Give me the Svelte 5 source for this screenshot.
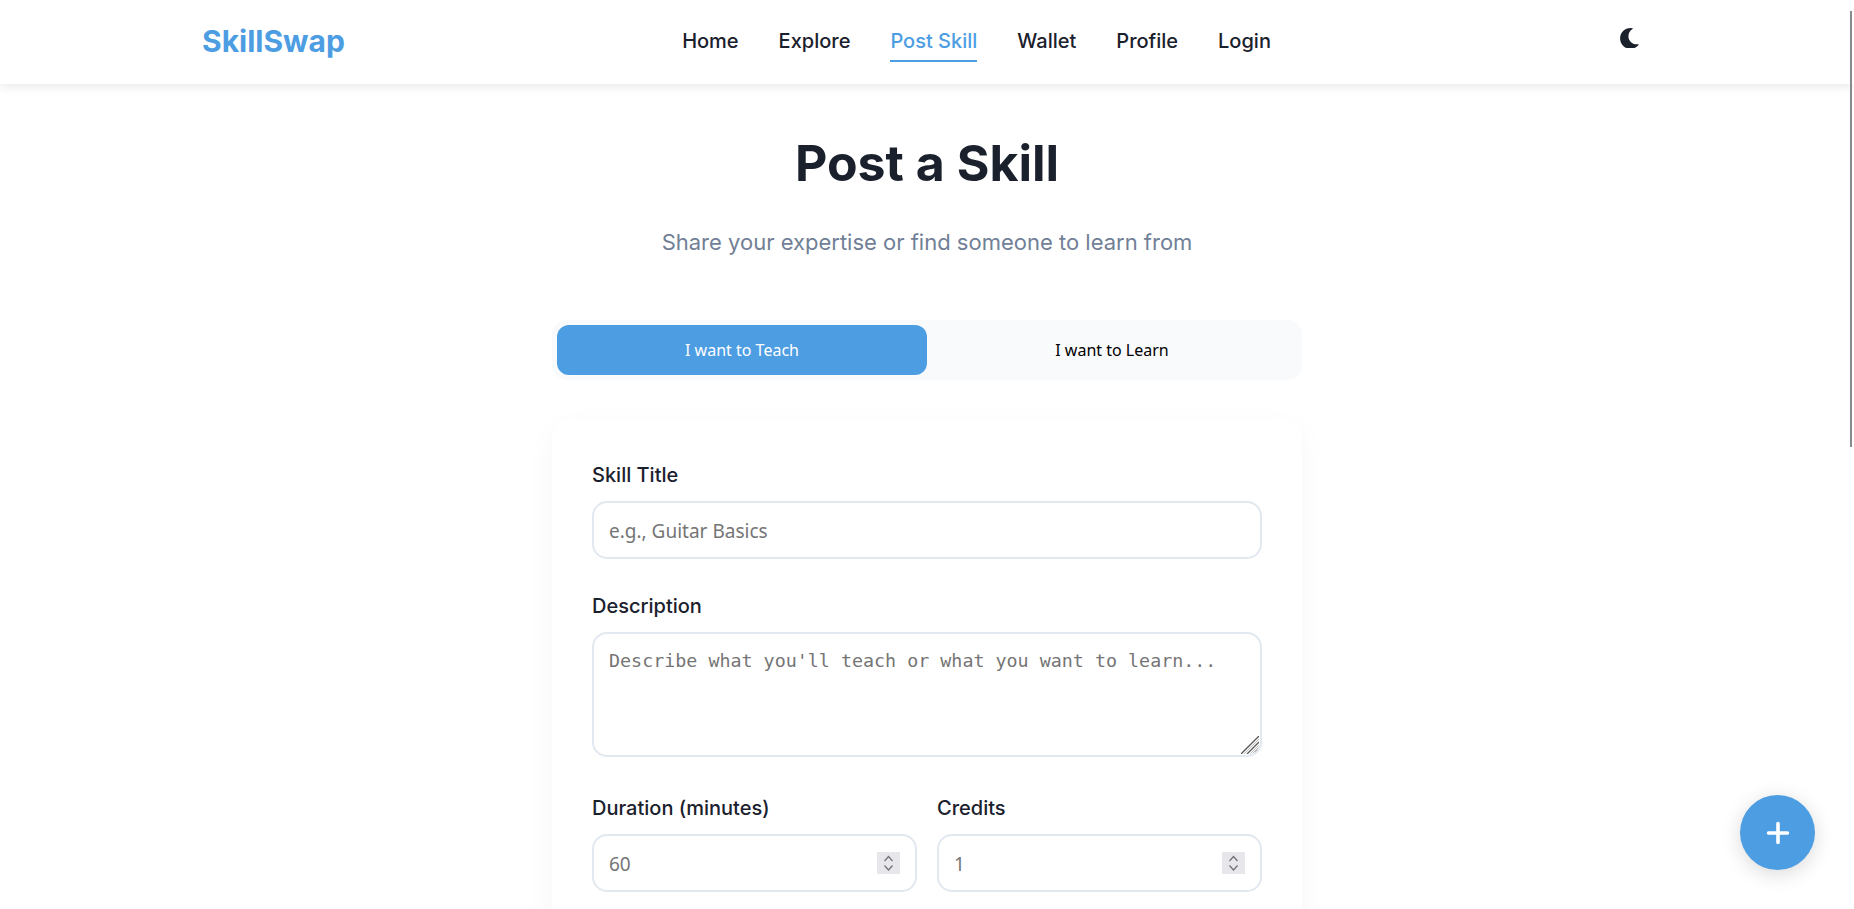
<script>
  const links = ['Home', 'Explore', 'Post Skill', 'Wallet', 'Profile', 'Login'];
  let mode = $state('teach');
</script>

{#snippet spinner()}
  <span class="spin">
    <svg viewBox="0 0 23 22" width="23" height="22">
      <path d="M7.5 9 11.5 4.5 15.5 9M7.5 13.5 11.5 18 15.5 13.5" fill="none" stroke="#6f6f76" stroke-width="1.2"/>
    </svg>
  </span>
{/snippet}

<div class="page">
  <header class="navbar">
    <div class="nav-inner">
      <div class="logo">SkillSwap</div>
      <nav class="links">
        {#each links as link}
          <a href="#top" class:active={link === 'Post Skill'}>{link}</a>
        {/each}
      </nav>
      <button class="theme" aria-label="Toggle theme">
        <svg viewBox="0 0 512 512" width="20.8" height="20.8">
          <path fill="#1a202c" d="M283.211 512c78.962 0 151.079-35.925 198.857-94.792 7.068-8.708-.639-21.43-11.562-19.35-124.203 23.654-238.262-71.576-238.262-196.954 0-72.222 38.662-138.635 101.498-174.394 9.686-5.512 7.25-20.197-3.756-22.23A258.156 258.156 0 0 0 283.211 0c-141.309 0-256 114.511-256 256 0 141.309 114.511 256 256 256z"/>
        </svg>
      </button>
    </div>
  </header>

  <main class="content">
    <h1>Post a Skill</h1>
    <p class="sub">Share your expertise or find someone to learn from</p>

    <div class="toggle">
      <button class:on={mode === 'teach'} onclick={() => (mode = 'teach')}>I want to Teach</button>
      <button class:on={mode === 'learn'} onclick={() => (mode = 'learn')}>I want to Learn</button>
    </div>

    <form class="card">
      <div class="group">
        <label for="title">Skill Title</label>
        <input id="title" type="text" placeholder="e.g., Guitar Basics" />
      </div>
      <div class="group tall">
        <label for="desc">Description</label>
        <div class="field">
          <textarea id="desc" placeholder="Describe what you'll teach or what you want to learn..."></textarea>
          <svg class="grip" viewBox="0 0 18 18" width="18" height="18">
            <path d="M0 18 18 0M6 18 18 6M12 18 18 12" stroke="#5c5c5c" stroke-width="1.4" fill="none"/>
            <path d="M3 18 18 3M9 18 18 9M15 18 18 15" stroke="#bdbdbd" stroke-width="1" fill="none"/>
          </svg>
        </div>
      </div>
      <div class="row">
        <div class="group">
          <label for="dur">Duration (minutes)</label>
          <div class="field">
            <input id="dur" type="number" placeholder="60" />
            {@render spinner()}
          </div>
        </div>
        <div class="group">
          <label for="cred">Credits</label>
          <div class="field">
            <input id="cred" type="number" placeholder="1" />
            {@render spinner()}
          </div>
        </div>
      </div>
    </form>
  </main>

  <div class="scroll-thumb"></div>
  <button class="fab" aria-label="Add">
    <svg viewBox="0 0 24 24" width="24" height="24">
      <path d="M12 2.5v19M2.5 12h19" stroke="#fff" stroke-width="3.6" stroke-linecap="round" fill="none"/>
    </svg>
  </button>
</div>

<style>
  :global(body) {
    margin: 0;
    overflow: hidden;
    background: #fff;
  }

  .page {
    height: 100vh;
    overflow: hidden;
    font-family: Inter, "Liberation Sans", sans-serif;
    color: #1a202c;
  }

  .navbar {
    height: 84px;
    background: #fff;
    box-shadow: 0 2px 10px rgba(0, 0, 0, 0.1);
    position: relative;
  }

  .nav-inner {
    width: 1450px;
    height: 100%;
    margin: 0 auto;
    display: flex;
    align-items: center;
    justify-content: space-between;
  }

  .logo {
    font-size: 30px;
    font-weight: 700;
    color: #4d9de3;
    margin-bottom: 2px;
  }

  .links {
    display: flex;
    gap: 40px;
    margin-left: -11px;
    margin-bottom: 2px;
  }

  .links a {
    font-size: 20px;
    font-weight: 500;
    color: #1a202c;
    text-decoration: none;
    padding: 9px 0 7px;
    border-bottom: 2px solid transparent;
  }

  .links a.active {
    color: #4d9de3;
    border-bottom-color: #4d9de3;
  }

  .theme {
    width: 20.8px;
    height: 20.8px;
    padding: 0;
    border: 0;
    background: none;
    margin-right: 12px;
    margin-top: -8px;
  }

  .theme svg {
    display: block;
  }

  .content {
    width: 750px;
    margin: 0 auto;
    padding-top: 44px;
    text-align: center;
  }

  h1 {
    margin: 0;
    font-size: 50px;
    font-weight: 700;
    line-height: 1.4;
  }

  .sub {
    margin: 30.5px 0 0;
    font-size: 22px;
    color: #718096;
  }

  .toggle {
    margin-top: 65.4px;
    display: flex;
    padding: 5px;
    background: #f8fafc;
    border-radius: 15px;
  }

  .toggle button {
    flex: 1;
    height: 50px;
    border: 0;
    background: none;
    border-radius: 12px;
    font-family: "Noto Sans", sans-serif;
    font-size: 16px;
    color: #000;
  }

  .toggle button.on {
    background: #4d9de3;
    color: #fff;
  }

  .card {
    margin-top: 39px;
    padding: 40.3px 40px 40px;
    text-align: left;
    background: #fff;
    border-radius: 20px;
    box-shadow: 0 10px 30px rgba(0, 0, 0, 0.04);
  }

  .group {
    margin-bottom: 31px;
  }

  .group.tall {
    margin-bottom: 35px;
  }

  label {
    display: block;
    margin-bottom: 10px;
    font-size: 20px;
    line-height: 32px;
    font-weight: 500;
  }

  .field {
    position: relative;
  }

  input,
  textarea {
    display: block;
    box-sizing: border-box;
    width: 100%;
    padding: 16px 15px 14px;
    border: 2px solid #e2e8f0;
    border-radius: 15px;
    background: #fff;
    font-size: 19px;
    font-family: "Noto Sans", sans-serif;
    outline: none;
    appearance: textfield;
  }

  input {
    height: 57.6px;
  }

  textarea {
    height: 125.5px;
    font-family: "DejaVu Sans Mono", monospace;
    font-size: 18.35px;
    resize: none;
  }

  input::placeholder,
  textarea::placeholder {
    color: #757575;
  }

  .row {
    display: grid;
    grid-template-columns: 1fr 1fr;
    gap: 20px;
  }

  .spin {
    position: absolute;
    right: 16.6px;
    top: 18px;
    width: 23px;
    height: 22px;
    background: #e6e6eb;
  }

  .spin svg {
    display: block;
  }

  .grip {
    position: absolute;
    right: 3px;
    bottom: 3px;
    border-bottom-right-radius: 10px;
  }

  .scroll-thumb {
    position: fixed;
    top: 11px;
    right: 2px;
    width: 2px;
    height: 436px;
    background: #8a8a8a;
  }

  .fab {
    position: fixed;
    right: 39px;
    bottom: 39px;
    width: 75px;
    height: 75px;
    padding: 0;
    border: 0;
    border-radius: 50%;
    background: #4d9de3;
    box-shadow: 0 4px 20px rgba(0, 0, 0, 0.15);
    display: flex;
    align-items: center;
    justify-content: center;
  }
</style>
